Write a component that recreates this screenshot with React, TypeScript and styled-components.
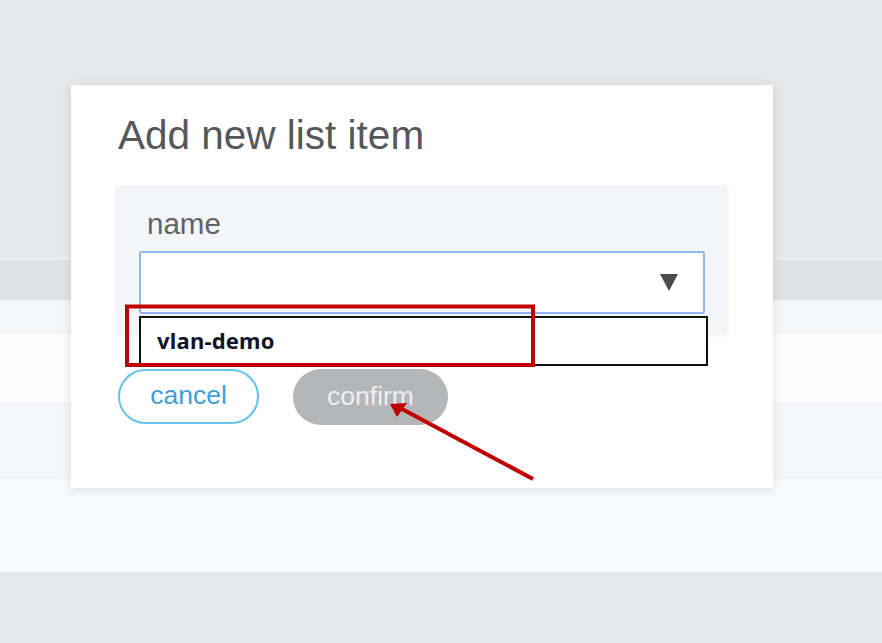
import React from "react";
import styled, { createGlobalStyle } from "styled-components";

const Global = createGlobalStyle`
  html, body { margin: 0; padding: 0; }
  body { font-family: "Liberation Sans", Arial, sans-serif; background: #e6e7e9; }
  #root { width: 882px; height: 643px; overflow: hidden; }
`;

const Page = styled.div`
  position: relative;
  width: 882px;
  height: 643px;
  display: flex;
  flex-direction: column;
  overflow: hidden;
`;

const Band = styled.div<{ $h: number; $bg: string; $line?: string }>`
  height: ${(p) => p.$h}px;
  background: ${(p) => p.$bg};
  border-top: ${(p) => (p.$line ? `1px solid ${p.$line}` : "none")};
  box-sizing: border-box;
  flex: none;
`;

const Fill = styled.div`
  flex: 1;
  background: #e6e7e9;
`;

const Modal = styled.div`
  position: absolute;
  left: 71px;
  top: 85px;
  width: 702px;
  height: 403px;
  box-sizing: border-box;
  background: #ffffff;
  box-shadow: 0 2px 10px rgba(0, 0, 0, 0.12);
  padding: 30px 46px 0 45px;
  display: flex;
  flex-direction: column;
`;

const Title = styled.h2`
  margin: 0 0 0 2px;
  font-family: "Liberation Sans", Arial, sans-serif;
  font-weight: 400;
  font-size: 40.5px;
  line-height: 40px;
  color: #55575b;
`;

const Panel = styled.div`
  margin-top: 31px;
  background: #f4f5f8;
  box-shadow: 0 1px 4px rgba(0, 0, 0, 0.08);
  padding: 23px 22px 20px 23px;
  display: flex;
  flex-direction: column;
`;

const Label = styled.label`
  font-family: "Liberation Sans", Arial, sans-serif;
  font-size: 29.5px;
  line-height: 29px;
  color: #606266;
  padding-left: 8px;
  margin-bottom: 13px;
`;

const SelectWrap = styled.div`
  position: relative;
`;

const SelectBox = styled.div`
  height: 63px;
  box-sizing: border-box;
  border: 2px solid #8fb5f2;
  border-radius: 3px;
  background: #ffffff;
  display: flex;
  align-items: center;
  justify-content: flex-end;
  padding-right: 25px;
`;

const Options = styled.ul`
  position: absolute;
  left: 0;
  top: 65px;
  width: 569px;
  height: 50px;
  box-sizing: border-box;
  margin: 0;
  padding: 0 0 2px 16px;
  list-style: none;
  background: #ffffff;
  border: 2px solid #111111;
  display: flex;
  align-items: center;
  z-index: 2;
`;

const Option = styled.li`
  font-family: "Noto Sans", "DejaVu Sans", sans-serif;
  font-weight: 700;
  font-size: 22px;
  letter-spacing: 0.2px;
  color: #12122a;
`;

const Buttons = styled.div`
  margin-top: 35px;
  padding-left: 2px;
  display: flex;
  gap: 34px;
  align-items: flex-start;
`;

const Pill = styled.button<{ $variant: "outline" | "disabled" }>`
  height: ${(p) => (p.$variant === "outline" ? 55 : 56)}px;
  width: ${(p) => (p.$variant === "outline" ? 141 : 155)}px;
  border-radius: 28px;
  box-sizing: border-box;
  font-family: "Liberation Sans", Arial, sans-serif;
  font-size: 26.5px;
  padding: 0 0 2px;
  cursor: pointer;
  border: ${(p) => (p.$variant === "outline" ? "2px solid #66c3ec" : "none")};
  background: ${(p) => (p.$variant === "outline" ? "#ffffff" : "#b5b6b8")};
  color: ${(p) => (p.$variant === "outline" ? "#3f9fd6" : "#eef0f3")};
`;

const Annotations = styled.svg`
  position: absolute;
  left: 0;
  top: 0;
  width: 882px;
  height: 643px;
  pointer-events: none;
  z-index: 5;
`;

export default function App() {
  return (
    <>
      <Global />
      <Page>
        <Band $h={258} $bg="#e6e7e9" />
        <Band $h={2} $bg="#eeeff1" />
        <Band $h={40} $bg="#e1e2e4" />
        <Band $h={32} $bg="#f5f7f9" />
        <Band $h={71} $bg="#fdfdfe" $line="#e8eaed" />
        <Band $h={74} $bg="#f4f8fb" $line="#eceef1" />
        <Band $h={95} $bg="#f9fafb" $line="#eceef0" />
        <Fill />

        <Modal>
          <Title>Add new list item</Title>
          <Panel>
            <Label>name</Label>
            <SelectWrap>
              <SelectBox>
                <svg width="18" height="17" viewBox="0 0 18 17">
                  <polygon points="0,0 18,0 9,17" fill="#4a4b4d" />
                </svg>
              </SelectBox>
              <Options>
                <Option>vlan-demo</Option>
              </Options>
            </SelectWrap>
          </Panel>
          <Buttons>
            <Pill $variant="outline">cancel</Pill>
            <Pill $variant="disabled">confirm</Pill>
          </Buttons>
        </Modal>

        <Annotations viewBox="0 0 882 643">
          <rect x="127" y="306.5" width="406" height="58.5" fill="none" stroke="#c00000" strokeWidth="4" />
          <line x1="533" y1="479" x2="402" y2="409" stroke="#c00000" strokeWidth="4" />
          <polygon points="390,404 407,403 397,417" fill="#c00000" />
        </Annotations>
      </Page>
    </>
  );
}
